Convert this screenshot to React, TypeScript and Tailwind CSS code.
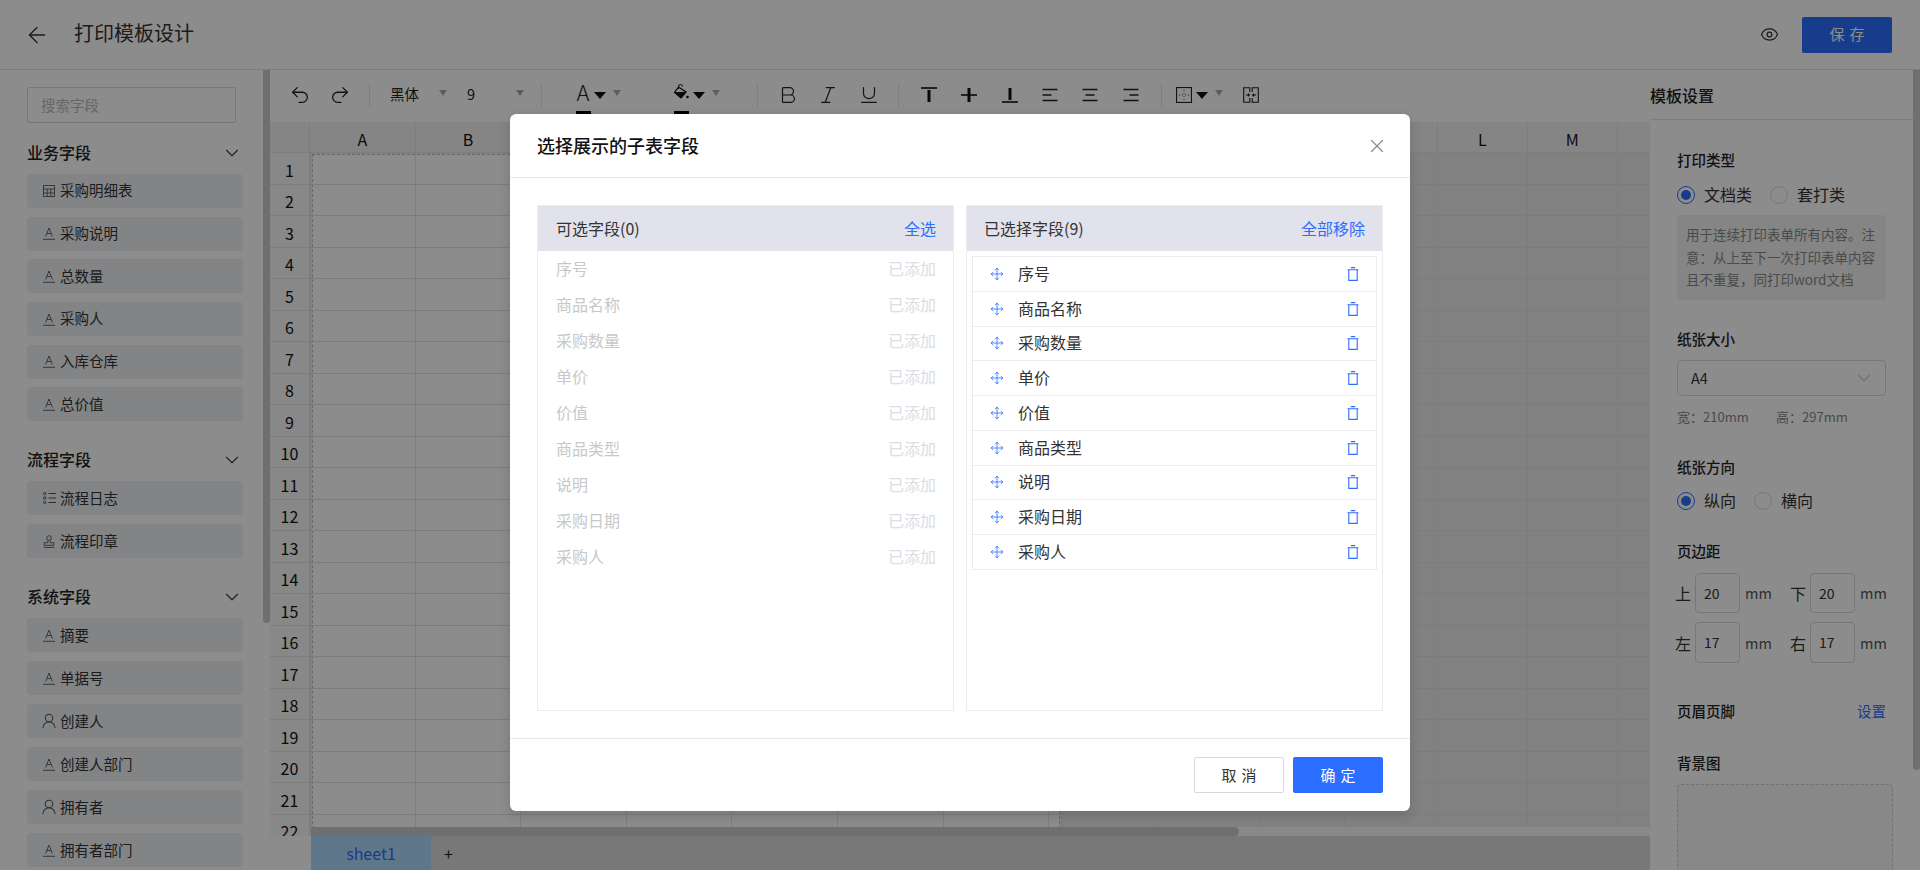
import { ArrowLeft, Bold, ChevronDown, Eye, Italic, Move, Redo2, Underline, Undo2, UserRound, X } from "lucide-react";

const fieldGroups = [
  {
    title: "业务字段",
    gap: "mt-[18px]",
    itemGap: "gap-[8.7px]",
    items: [
      { icon: "table", label: "采购明细表" },
      { icon: "text", label: "采购说明" },
      { icon: "text", label: "总数量" },
      { icon: "text", label: "采购人" },
      { icon: "text", label: "入库仓库" },
      { icon: "text", label: "总价值" },
    ],
  },
  {
    title: "流程字段",
    gap: "mt-[27px]",
    itemGap: "gap-[9px]",
    items: [
      { icon: "list", label: "流程日志" },
      { icon: "stamp", label: "流程印章" },
    ],
  },
  {
    title: "系统字段",
    gap: "mt-[27px]",
    itemGap: "gap-[9px]",
    items: [
      { icon: "text", label: "摘要" },
      { icon: "text", label: "单据号" },
      { icon: "user", label: "创建人" },
      { icon: "text", label: "创建人部门" },
      { icon: "user", label: "拥有者" },
      { icon: "text", label: "拥有者部门" },
    ],
  },
];

const subFields = ["序号", "商品名称", "采购数量", "单价", "价值", "商品类型", "说明", "采购日期", "采购人"];

const columns = [
  { name: "A", width: "w-[105.6px]" },
  { name: "B", width: "w-[105.6px]" },
  { name: "C", width: "w-[105.6px]" },
  { name: "D", width: "w-[105.6px]" },
  { name: "E", width: "w-[105.6px]" },
  { name: "F", width: "w-[105.6px]" },
  { name: "G", width: "w-[105.6px]" },
  { name: "H", width: "w-[105.6px]" },
  { name: "I", width: "w-[105.6px]" },
  { name: "J", width: "w-[85px]" },
  { name: "K", width: "w-[92.5px]" },
  { name: "L", width: "w-[90px]" },
  { name: "M", width: "w-[90px]" },
  { name: "N", width: "w-[90px]" },
];

const rows = Array.from({ length: 22 }, (_, i) => i + 1);

function FieldIcon({ kind }: { kind: string }) {
  if (kind === "user") return <UserRound className="h-[18px] w-[18px] shrink-0 text-[#555]" strokeWidth={1.4} />;
  if (kind === "stamp") {
    return (
      <svg viewBox="0 0 12 13" className="h-[13px] w-[12px] shrink-0 text-[#666]" fill="none" stroke="currentColor">
        <circle cx="6" cy="3" r="2.3" />
        <path d="M4.8 5.3v2.4H1.2v2.6h9.6V7.7H7.2V5.3M0.6 12.4h10.8" />
      </svg>
    );
  }
  if (kind === "table") {
    return (
      <svg viewBox="0 0 12 12" className="h-[12px] w-[12px] shrink-0 text-[#666]" fill="none" stroke="currentColor">
        <rect x="0.5" y="0.5" width="11" height="11" />
        <path d="M0.5 4h11M0.5 8h11M4.2 4v7.5M7.8 4v7.5" />
      </svg>
    );
  }
  if (kind === "list") {
    return (
      <svg viewBox="0 0 13 12" className="h-[12px] w-[13px] shrink-0 text-[#555]" fill="none" stroke="currentColor">
        <path d="M5.5 1.5H13M5.5 6H13M5.5 10.5H13" />
        <circle cx="1.7" cy="1.5" r="1.2" />
        <circle cx="1.7" cy="6" r="1.2" />
        <circle cx="1.7" cy="10.5" r="1.2" />
      </svg>
    );
  }
  return (
    <svg viewBox="0 0 12 13" className="h-[13px] w-[12px] shrink-0 text-[#666]" fill="none" stroke="currentColor">
      <path d="M2.6 9.5 6 1l3.4 8.5M3.8 6.5h4.4" />
      <path d="M0 12.3h12" />
    </svg>
  );
}

function Caret({ className }: { className: string }) {
  return <span className={`mb-[4px] h-0 w-0 border-x-[4px] border-t-[6px] border-x-transparent border-t-[#aaa] ${className}`} />;
}

function DarkCaret({ className }: { className: string }) {
  return <span className={`mt-[2px] h-0 w-0 border-x-[6px] border-t-[7px] border-x-transparent border-t-[#111] ${className}`} />;
}

function Divider({ className }: { className: string }) {
  return <span className={`h-[24px] w-px bg-[#e8e8e8] ${className}`} />;
}

function AlignIcon({ d, className }: { d: string; className: string }) {
  return (
    <svg viewBox="0 0 16 16" className={`h-4 w-4 shrink-0 text-[#222] ${className}`} fill="none" stroke="currentColor" strokeWidth="1.4">
      <path d={d} />
    </svg>
  );
}

function Toolbar() {
  return (
    <div className="flex h-[53px] shrink-0 items-center border-b border-[#eee] pb-[3px] pl-[22px] text-[#222]">
      <Undo2 className="-mx-[3px] h-[22px] w-[22px] shrink-0" strokeWidth={1.4} />
      <Redo2 className="-mr-[3px] ml-[21px] h-[22px] w-[22px] shrink-0" strokeWidth={1.4} />
      <Divider className="ml-[21px]" />
      <span className="ml-[20px] w-[30px] text-[14.5px] leading-none">黑体</span>
      <Caret className="ml-[19px]" />
      <span className="ml-[20px] w-[9px] text-[14.5px] leading-none">9</span>
      <Caret className="ml-[40px]" />
      <Divider className="ml-[17px]" />
      <div className="mt-[9px] ml-[33px] flex h-[30px] w-[16px] flex-col items-center justify-between">
        <span className="text-[22px] leading-[15px] font-light">A</span>
        <span className="h-[3px] w-[15px] bg-black" />
      </div>
      <DarkCaret className="ml-[3px]" />
      <Caret className="ml-[7px]" />
      <div className="mt-[9px] ml-[52px] flex h-[30px] w-[16px] flex-col items-center justify-between">
        <svg viewBox="0 0 16 16" className="h-4 w-4 text-[#111]" fill="none" stroke="currentColor">
          <path d="M5.5 3 13 8 8 14 1.5 8.5z" strokeWidth="1.2" />
          <path d="M2 8.5h10.5L8 14z" fill="currentColor" />
          <path d="M5.5 5V2.5a2 2 0 0 1 4 0" />
          <circle cx="14.5" cy="13" r="1.3" fill="currentColor" stroke="none" />
        </svg>
        <span className="h-[3px] w-[15px] bg-black" />
      </div>
      <DarkCaret className="ml-[4px]" />
      <Caret className="ml-[7px]" />
      <Divider className="ml-[37px]" />
      <Bold className="-mx-[3px] ml-[19px] h-[22px] w-[22px] shrink-0" strokeWidth={1.3} />
      <Italic className="-mx-[3px] ml-[21px] h-[22px] w-[22px] shrink-0" strokeWidth={1.3} />
      <Underline className="-mx-[3px] ml-[22px] h-[22px] w-[22px] shrink-0" strokeWidth={1.3} />
      <Divider className="ml-[21px]" />
      <svg viewBox="0 0 16 16" className="ml-[22px] h-4 w-4 shrink-0 text-[#111]" fill="none" stroke="currentColor">
        <path d="M0 1h16" strokeWidth="1.6" />
        <path d="M8 3v12" strokeWidth="3" />
      </svg>
      <svg viewBox="0 0 16 16" className="ml-[24px] h-4 w-4 shrink-0 text-[#111]" fill="none" stroke="currentColor">
        <path d="M0 8h16" strokeWidth="1.6" />
        <path d="M8 1v14" strokeWidth="3" />
      </svg>
      <svg viewBox="0 0 16 16" className="ml-[25px] h-4 w-4 shrink-0 text-[#111]" fill="none" stroke="currentColor">
        <path d="M0 15h16" strokeWidth="1.6" />
        <path d="M8 1v12" strokeWidth="3" />
      </svg>
      <AlignIcon className="ml-[24px]" d="M0.5 2.5h15M0.5 8h9M0.5 13.5h15" />
      <AlignIcon className="ml-[24px]" d="M0.5 2.5h15M3.5 8h9M0.5 13.5h15" />
      <AlignIcon className="ml-[25px]" d="M0.5 2.5h15M6.5 8h9M0.5 13.5h15" />
      <Divider className="ml-[22px]" />
      <svg viewBox="0 0 16 16" className="ml-[14px] h-4 w-4 shrink-0 text-[#222]" fill="none" stroke="currentColor">
        <rect x="0.5" y="0.5" width="15" height="15" strokeWidth="1.2" />
        <path d="M8 3v10M3 8h10" strokeDasharray="1 2" strokeWidth="0.8" />
      </svg>
      <DarkCaret className="ml-[4px]" />
      <Caret className="ml-[7px]" />
      <svg viewBox="0 0 16 16" className="ml-[20px] h-4 w-4 shrink-0 text-[#222]" fill="none" stroke="currentColor" strokeWidth="1.1">
        <path d="M6.8 5V0.7H0.7v14.6h6.1V11M9.2 5V0.7h6.1v14.6H9.2V11" />
        <path d="M3 8h3.4M13 8H9.6M5 6.6 6.4 8 5 9.4M11 6.6 9.6 8l1.4 1.4" />
      </svg>
    </div>
  );
}

function SheetGrid() {
  return (
    <div className="relative min-h-0 flex-1 overflow-hidden bg-[#ececec]">
      {/* printable page area */}
      <div className="absolute top-[31px] left-[42px] h-[700px] w-[748px] border-x border-t border-dashed border-[#bdbdbd] bg-white" />
      <div className="relative flex h-[30px] border-b border-[#e4e4e4] bg-[#f3f3f3]">
        <div className="w-[40px] shrink-0 border-r border-[#e4e4e4]" />
        {columns.map((c) => (
          <div key={c.name} className={`${c.width} flex shrink-0 items-center justify-center border-r border-[#e4e4e4] pt-[2px] text-[16px] text-[#111]`}>
            {c.name}
          </div>
        ))}
      </div>
      {rows.map((r) => (
        <div key={r} className="relative flex h-[31.5px] border-b border-[#e2e2e2]">
          <div className="flex w-[40px] shrink-0 items-center justify-center border-r border-[#e4e4e4] bg-[#f7f7f7] pt-[3px] text-[16px] text-[#111]">{r}</div>
          {columns.map((c) => (
            <div key={c.name} className={`${c.width} shrink-0 border-r border-[#e4e4e4]`} />
          ))}
        </div>
      ))}
      {/* horizontal scrollbar sits over the last row */}
      <div className="absolute right-0 bottom-0 left-[41px] h-[9px] bg-[#fafafa]">
        <div className="h-full w-[928px] rounded-r-full bg-[#c9cacd]" />
      </div>
    </div>
  );
}

function RadioRow({ options, gap }: { options: string[]; gap: string }) {
  return (
    <div className="flex h-[20px] items-center text-[16px] text-[#333]">
      {options.map((o, i) => (
        <div key={o} className={`flex items-center ${i > 0 ? gap : ""}`}>
          {i === 0 ? (
            <span className="flex h-[18px] w-[18px] items-center justify-center rounded-full border border-[#2c6eff]">
              <span className="h-[10px] w-[10px] rounded-full bg-[#2c6eff]" />
            </span>
          ) : (
            <span className="h-[18px] w-[18px] rounded-full border border-[#d9d9d9]" />
          )}
          <span className="mb-[2px] ml-[9px]">{o}</span>
        </div>
      ))}
    </div>
  );
}

function MarginRow({ a, b, va, vb, h }: { a: string; b: string; va: string; vb: string; h: string }) {
  return (
    <div className="-ml-[2px] flex items-center text-[16px] text-[#333]">
      <span className="w-[16px] leading-none">{a}</span>
      <div className={`ml-[4px] flex w-[45px] items-center rounded border border-[#d9d9d9] pl-[8px] text-[14px] ${h}`}>{va}</div>
      <span className="ml-[5px] w-[26px] text-[14.5px] text-[#555]">mm</span>
      <span className="ml-[19px] w-[16px] leading-none">{b}</span>
      <div className={`ml-[4px] flex w-[45px] items-center rounded border border-[#d9d9d9] pl-[8px] text-[14px] ${h}`}>{vb}</div>
      <span className="ml-[5px] w-[26px] text-[14.5px] text-[#555]">mm</span>
    </div>
  );
}

function Label({ children, className }: { children: string; className: string }) {
  return <div className={`h-[20px] text-[14.5px] leading-[20px] font-medium text-[#222] ${className}`}>{children}</div>;
}

function SettingsPanel() {
  return (
    <aside className="relative w-[270px] shrink-0 overflow-hidden">
      <div className="mr-[7px] flex h-[50px] items-center border-b border-[#e4e4e4] text-[16px] font-medium text-[#222]">模板设置</div>
      <div className="absolute top-0 right-0 h-[700px] w-[7px] rounded-b bg-[#c9cacd]" />
      <div className="pl-[27px]">
        <Label className="mt-[30px]">打印类型</Label>
        <div className="mt-[15px]">
          <RadioRow options={["文档类", "套打类"]} gap="ml-[18px]" />
        </div>
        <div className="mt-[10px] h-[85px] w-[209px] rounded bg-[#f3f3f3] px-[9px] pt-[8px] text-[13.5px] leading-[22.5px] text-[#888]">
          用于连续打印表单所有内容。注意：从上至下一次打印表单内容且不重复，同打印word文档
        </div>
        <Label className="mt-[29px]">纸张大小</Label>
        <div className="mt-[11px] flex h-[36px] w-[209px] items-center justify-between rounded border border-[#d9d9d9] pr-[10px] pl-[13px] text-[14.5px] text-[#333]">
          A4
          <ChevronDown className="h-[22px] w-[22px] text-[#bbb]" strokeWidth={1.1} />
        </div>
        <div className="mt-[11px] flex h-[20px] items-center text-[13px] text-[#888]">
          <span className="w-[99px]">宽：210mm</span>
          <span>高：297mm</span>
        </div>
        <Label className="mt-[30px]">纸张方向</Label>
        <div className="mt-[14px]">
          <RadioRow options={["纵向", "横向"]} gap="ml-[18px]" />
        </div>
        <Label className="mt-[30px]">页边距</Label>
        <div className="mt-[12px] flex flex-col gap-[9px]">
          <MarginRow a="上" b="下" va="20" vb="20" h="h-[40px]" />
          <MarginRow a="左" b="右" va="17" vb="17" h="h-[41px]" />
        </div>
        <div className="mt-[38px] flex w-[209px] items-center justify-between">
          <Label className="">页眉页脚</Label>
          <span className="text-[14.5px] leading-[20px] text-[#2c6eff]">设置</span>
        </div>
        <Label className="mt-[32px]">背景图</Label>
        <div className="mt-[11px] h-[120px] w-[216px] rounded border border-dashed border-[#cfcfcf] bg-[#f7f8f7]" />
      </div>
    </aside>
  );
}

function SubFieldDialog() {
  return (
    <div className="absolute inset-0 flex justify-center pt-[114px]">
      <div className="h-[697px] w-[900px] rounded-[6px] bg-white shadow-[0_4px_12px_rgba(0,0,0,0.15)]">
        <div className="flex h-[64px] items-center justify-between border-b border-[#e8e8e8] pr-[22px] pl-[27px]">
          <h2 className="text-[18px] font-medium text-[#111]">选择展示的子表字段</h2>
          <X className="h-[22px] w-[22px] text-[#8c8c8c]" strokeWidth={1.4} />
        </div>
        <div className="flex h-[561px] gap-[12px] border-b border-[#e8e8e8] px-[27px] pt-[27px]">
          <div className="h-[506px] w-[417px] border border-[#ececf0]">
            <div className="flex h-[45px] items-center justify-between bg-[#e1e2ec] pr-[17px] pb-[2px] pl-[18px] text-[16px] text-[#333]">
              <span>可选字段(0)</span>
              <span className="text-[#2c6eff]">全选</span>
            </div>
            {subFields.map((f) => (
              <div key={f} className="flex h-[36px] items-center justify-between pr-[17px] pb-[2px] pl-[18px] text-[16px] text-[#c8c8c8]">
                <span>{f}</span>
                <span className="text-[#dcdde6]">已添加</span>
              </div>
            ))}
          </div>
          <div className="h-[506px] w-[417px] border border-[#ececf0]">
            <div className="flex h-[45px] items-center justify-between bg-[#e1e2ec] pr-[17px] pb-[2px] pl-[17px] text-[16px] text-[#333]">
              <span>已选择字段(9)</span>
              <span className="text-[#2c6eff]">全部移除</span>
            </div>
            <div className="mx-[5px] mt-[5px] border-x border-t border-[#ececf0]">
              {subFields.map((f) => (
                <div key={f} className="flex h-[34.75px] items-center border-b border-[#ececf0] pr-[17px] pl-[17px] text-[16px] text-[#333]">
                  <Move className="h-[14px] w-[14px] shrink-0 text-[#2c6eff]" strokeWidth={1.4} />
                  <span className="mb-[2px] ml-[14px] flex-1">{f}</span>
                  <svg viewBox="0 0 12 14" className="h-[14px] w-[12px] shrink-0 text-[#2c6eff]" fill="none" stroke="currentColor" strokeWidth="1.1">
                    <path d="M3.8 0.6h4.4M0.5 2.8h11M1.8 2.8v10.6h8.4V2.8" />
                  </svg>
                </div>
              ))}
            </div>
          </div>
        </div>
        <div className="flex justify-end gap-[9px] pt-[18px] pr-[27px]">
          <button type="button" className="h-[36px] w-[90px] rounded-[2px] border border-[#d9d9d9] bg-white indent-[5px] text-[15px] tracking-[5px] text-[#333]">
            取消
          </button>
          <button type="button" className="h-[36px] w-[90px] rounded-[2px] bg-[#2c6eff] indent-[5px] text-[15px] tracking-[5px] text-white">
            确定
          </button>
        </div>
      </div>
    </div>
  );
}

export default function App() {
  return (
    <div className="relative flex h-[870px] w-[1920px] flex-col overflow-hidden bg-white font-['Noto_Sans_CJK_SC','Noto_Sans',sans-serif]">
      <header className="flex h-[70px] shrink-0 items-center border-b border-[#e4e4e4] pr-[28px] pl-[24px]">
        <ArrowLeft className="h-[26px] w-[26px] shrink-0 text-[#333]" strokeWidth={1.2} />
        <h1 className="mb-[3px] ml-[24px] flex-1 text-[20px] text-[#333]">打印模板设计</h1>
        <Eye className="h-[19px] w-[19px] text-[#333]" strokeWidth={1.5} />
        <button type="button" className="ml-[23px] h-[36px] w-[90px] rounded-[2px] bg-[#2c6eff] indent-[5px] text-[15px] tracking-[5px] text-white">
          保存
        </button>
      </header>

      <div className="flex min-h-0 flex-1">
        <aside className="relative w-[270px] shrink-0 overflow-hidden pt-[17px] pl-[27px]">
          <div className="absolute top-0 right-0 h-[553px] w-[7px] rounded-b bg-[#c9cacd]" />
          <div className="flex h-[36px] w-[209px] items-center rounded-[2px] border border-[#d9d9d9] pl-[13px] text-[14.5px] text-[#bbb]">搜索字段</div>
          {fieldGroups.map((g) => (
            <section key={g.title} className={g.gap}>
              <div className="flex h-[24px] w-[216px] items-center justify-between text-[16px] font-medium text-[#222]">
                <span className="mb-[2px]">{g.title}</span>
                <ChevronDown className="h-[22px] w-[22px] text-[#444]" strokeWidth={1.3} />
              </div>
              <div className={`mt-[9px] flex flex-col ${g.itemGap}`}>
                {g.items.map((item) => (
                  <div key={item.label} className="flex h-[34px] w-[216px] items-center rounded-[4px] bg-[#eff1f5] pl-[16px] text-[14.5px] text-[#333]">
                    <span className="flex w-[12px] justify-center">
                      <FieldIcon kind={item.icon} />
                    </span>
                    <span className="mb-[2px] ml-[5px]">{item.label}</span>
                  </div>
                ))}
              </div>
            </section>
          ))}
        </aside>

        <main className="flex min-w-0 flex-1 flex-col">
          <Toolbar />
          <SheetGrid />
          <div className="flex h-[34px] shrink-0 items-center bg-[#dadada]">
            <div className="h-full w-[41px] bg-white" />
            <div className="flex h-full w-[120px] items-center justify-center bg-[#aed9fe] text-[16px] text-[#2f6bff]">sheet1</div>
            <span className="ml-[13px] text-[16px] text-[#222]">+</span>
          </div>
        </main>

        <SettingsPanel />
      </div>

      {/* modal mask */}
      <div className="absolute inset-0 bg-black/45" />
      <SubFieldDialog />
    </div>
  );
}
